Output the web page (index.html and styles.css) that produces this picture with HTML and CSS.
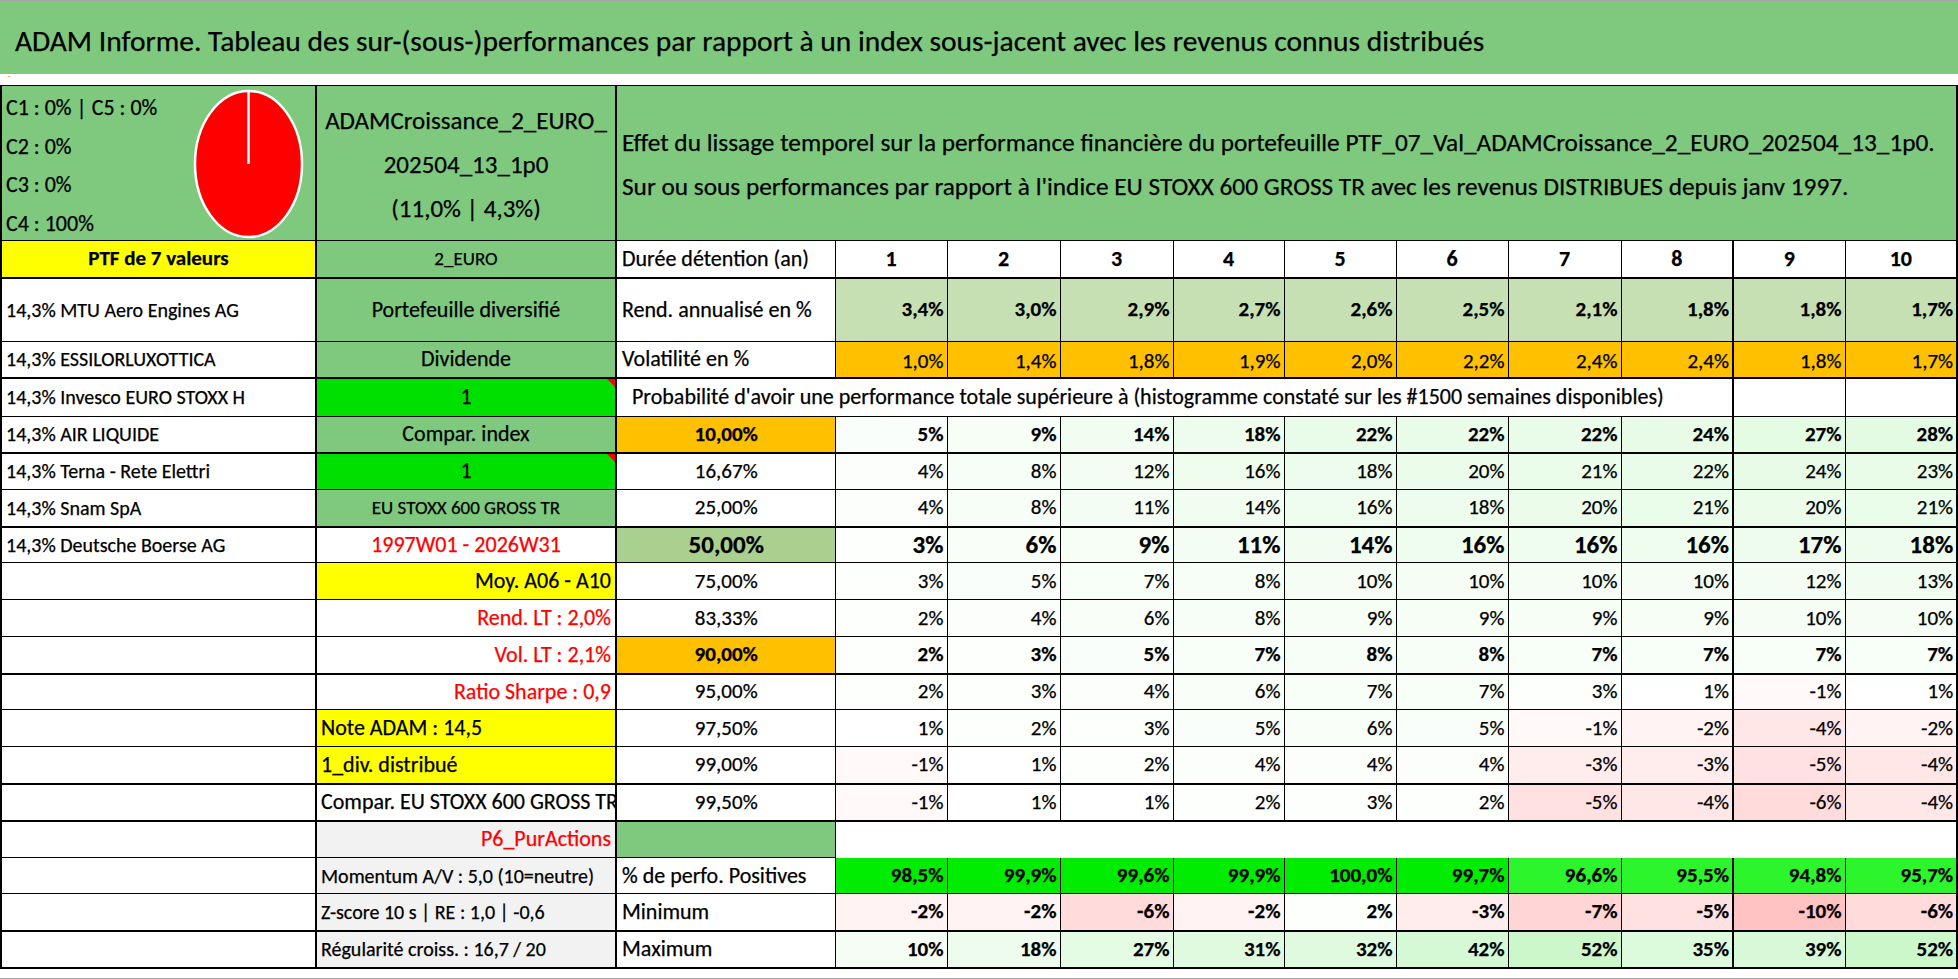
FILE: index.html
```html
<!DOCTYPE html>
<html lang="fr">
<head>
<meta charset="utf-8">
<title>ADAM Informe</title>
<link rel="stylesheet" href="styles.css">
</head>
<body>
<div class="sheet">
  <div class="title">ADAM Informe. Tableau des sur-(sous-)performances par rapport à un index sous-jacent avec les revenus connus distribués</div>
  <div class="gap"><span class="mark">˝</span></div>
  <table class="grid">
    <colgroup>
      <col class="wa"><col class="wb"><col class="wc">
      <col class="w112"><col class="w113"><col class="w113"><col class="w111"><col class="w112">
      <col class="w112"><col class="w113"><col class="w112"><col class="w112"><col class="w112">
    </colgroup>
    <tr class="h155">
      <td class="ca pie green">
        <div class="pie-box">
          <div class="clines">C1 : 0% | C5 : 0%<br>C2 : 0%<br>C3 : 0%<br>C4 : 100%</div>
          <svg class="pie-svg" width="112" height="155" viewBox="0 0 112 155">
            <ellipse cx="56.5" cy="78" rx="53.5" ry="73" fill="#ff0000" stroke="#ffffff" stroke-width="2.5"/>
            <line x1="56.5" y1="5" x2="56.5" y2="78" stroke="#ffffff" stroke-width="2.5"/>
          </svg>
        </div>
      </td>
      <td class="cb green hname">ADAMCroissance_2_EURO_<br>202504_13_1p0<br>(11,0% | 4,3%)</td>
      <td class="desc green edge" colspan="11">Effet du lissage temporel sur la performance financière du portefeuille PTF_07_Val_ADAMCroissance_2_EURO_202504_13_1p0.<br>Sur ou sous performances par rapport à l'indice EU STOXX 600 GROSS TR avec les revenus DISTRIBUES depuis janv 1997.</td>
    </tr>
    <tr class="h37 tb">
      <td class="ca yellow c b ptf">PTF de 7 valeurs</td>
      <td class="cb green small">2_EURO</td>
      <td class="cc">Durée détention (an)</td>
      <td class="hd">1</td><td class="hd">2</td><td class="hd">3</td><td class="hd">4</td><td class="hd">5</td>
      <td class="hd">6</td><td class="hd">7</td><td class="hd">8</td><td class="hd d9">9</td><td class="hd edge">10</td>
    </tr>
    <tr class="h64">
      <td class="ca">14,3% MTU Aero Engines AG</td>
      <td class="cb green">Portefeuille diversifié</td>
      <td class="cc">Rend. annualisé en %</td>
      <td class="d b rend">3,4%</td><td class="d b rend">3,0%</td><td class="d b rend">2,9%</td><td class="d b rend">2,7%</td><td class="d b rend">2,6%</td>
      <td class="d b rend">2,5%</td><td class="d b rend">2,1%</td><td class="d b rend">1,8%</td><td class="d b rend d9">1,8%</td><td class="d b rend edge">1,7%</td>
    </tr>
    <tr class="h36 tb">
      <td class="ca">14,3% ESSILORLUXOTTICA</td>
      <td class="cb green">Dividende</td>
      <td class="cc">Volatilité en %</td>
      <td class="d orange low">1,0%</td><td class="d orange low">1,4%</td><td class="d orange low">1,8%</td><td class="d orange low">1,9%</td><td class="d orange low">2,0%</td>
      <td class="d orange low">2,2%</td><td class="d orange low">2,4%</td><td class="d orange low">2,4%</td><td class="d orange low d9">1,8%</td><td class="d orange low edge">1,7%</td>
    </tr>
    <tr class="h39">
      <td class="ca">14,3% Invesco EURO STOXX H</td>
      <td class="cb lime flag">1</td>
      <td class="cc proba" colspan="9">Probabilité d'avoir une performance totale supérieure à (histogramme constaté sur les #1500 semaines disponibles)</td>
      <td class="d d9"></td><td class="d edge"></td>
    </tr>
    <tr class="h36 tb">
      <td class="ca">14,3% AIR LIQUIDE</td>
      <td class="cb green">Compar. index</td>
      <td class="cc c b orange pct">10,00%</td>
      <td class="d b g5">5%</td><td class="d b g9">9%</td><td class="d b g14">14%</td><td class="d b g18">18%</td><td class="d b g22">22%</td>
      <td class="d b g22">22%</td><td class="d b g22">22%</td><td class="d b g24">24%</td><td class="d b g27 d9">27%</td><td class="d b g28 edge">28%</td>
    </tr>
    <tr class="h37">
      <td class="ca">14,3% Terna - Rete Elettri</td>
      <td class="cb lime flag">1</td>
      <td class="cc c pct">16,67%</td>
      <td class="d g4">4%</td><td class="d g8">8%</td><td class="d g12">12%</td><td class="d g16">16%</td><td class="d g18">18%</td>
      <td class="d g20">20%</td><td class="d g21">21%</td><td class="d g22">22%</td><td class="d g24 d9">24%</td><td class="d g23 edge">23%</td>
    </tr>
    <tr class="h37 tb">
      <td class="ca">14,3% Snam SpA</td>
      <td class="cb green small">EU STOXX 600 GROSS TR</td>
      <td class="cc c pct">25,00%</td>
      <td class="d g4">4%</td><td class="d g8">8%</td><td class="d g11">11%</td><td class="d g14">14%</td><td class="d g16">16%</td>
      <td class="d g18">18%</td><td class="d g20">20%</td><td class="d g21">21%</td><td class="d g20 d9">20%</td><td class="d g21 edge">21%</td>
    </tr>
    <tr class="h36">
      <td class="ca">14,3% Deutsche Boerse AG</td>
      <td class="cb red">1997W01 - 2026W31</td>
      <td class="cc c b mid big">50,00%</td>
      <td class="d b big g3">3%</td><td class="d b big g6">6%</td><td class="d b big g9">9%</td><td class="d b big g11">11%</td><td class="d b big g14">14%</td>
      <td class="d b big g16">16%</td><td class="d b big g16">16%</td><td class="d b big g16">16%</td><td class="d b big g17 d9">17%</td><td class="d b big g18 edge">18%</td>
    </tr>
    <tr class="h37">
      <td class="ca"></td>
      <td class="cb yellow r">Moy. A06 - A10</td>
      <td class="cc c pct">75,00%</td>
      <td class="d g3">3%</td><td class="d g5">5%</td><td class="d g7">7%</td><td class="d g8">8%</td><td class="d g10">10%</td>
      <td class="d g10">10%</td><td class="d g10">10%</td><td class="d g10">10%</td><td class="d g12 d9">12%</td><td class="d g13 edge">13%</td>
    </tr>
    <tr class="h37">
      <td class="ca"></td>
      <td class="cb red r">Rend. LT : 2,0%</td>
      <td class="cc c pct">83,33%</td>
      <td class="d g2">2%</td><td class="d g4">4%</td><td class="d g6">6%</td><td class="d g8">8%</td><td class="d g9">9%</td>
      <td class="d g9">9%</td><td class="d g9">9%</td><td class="d g9">9%</td><td class="d g10 d9">10%</td><td class="d g10 edge">10%</td>
    </tr>
    <tr class="h37 tb">
      <td class="ca"></td>
      <td class="cb red r">Vol. LT : 2,1%</td>
      <td class="cc c b orange pct">90,00%</td>
      <td class="d b g2">2%</td><td class="d b g3">3%</td><td class="d b g5">5%</td><td class="d b g7">7%</td><td class="d b g8">8%</td>
      <td class="d b g8">8%</td><td class="d b g7">7%</td><td class="d b g7">7%</td><td class="d b g7 d9">7%</td><td class="d b g7 edge">7%</td>
    </tr>
    <tr class="h36">
      <td class="ca"></td>
      <td class="cb red r">Ratio Sharpe : 0,9</td>
      <td class="cc c pct">95,00%</td>
      <td class="d g2">2%</td><td class="d g3">3%</td><td class="d g4">4%</td><td class="d g6">6%</td><td class="d g7">7%</td>
      <td class="d g7">7%</td><td class="d g3">3%</td><td class="d g1">1%</td><td class="d n1 d9">-1%</td><td class="d g1 edge">1%</td>
    </tr>
    <tr class="h37">
      <td class="ca"></td>
      <td class="cb yellow l">Note ADAM : 14,5</td>
      <td class="cc c pct">97,50%</td>
      <td class="d g1">1%</td><td class="d g2">2%</td><td class="d g3">3%</td><td class="d g5">5%</td><td class="d g6">6%</td>
      <td class="d g5">5%</td><td class="d n1">-1%</td><td class="d n2">-2%</td><td class="d n4 d9">-4%</td><td class="d n2 edge">-2%</td>
    </tr>
    <tr class="h37 tb">
      <td class="ca"></td>
      <td class="cb yellow l">1_div. distribué</td>
      <td class="cc c pct">99,00%</td>
      <td class="d n1">-1%</td><td class="d g1">1%</td><td class="d g2">2%</td><td class="d g4">4%</td><td class="d g4">4%</td>
      <td class="d g4">4%</td><td class="d n3">-3%</td><td class="d n3">-3%</td><td class="d n5 d9">-5%</td><td class="d n4 edge">-4%</td>
    </tr>
    <tr class="h37 tb">
      <td class="ca"></td>
      <td class="cb l">Compar. EU STOXX 600 GROSS TR</td>
      <td class="cc c pct">99,50%</td>
      <td class="d n1">-1%</td><td class="d g1">1%</td><td class="d g1">1%</td><td class="d g2">2%</td><td class="d g3">3%</td>
      <td class="d g2">2%</td><td class="d n5">-5%</td><td class="d n4">-4%</td><td class="d n6 d9">-6%</td><td class="d n4 edge">-4%</td>
    </tr>
    <tr class="h37">
      <td class="ca"></td>
      <td class="cb grey red r">P6_PurActions</td>
      <td class="cc green"></td>
      <td class="blank edge" colspan="10"></td>
    </tr>
    <tr class="h36 topless">
      <td class="ca"></td>
      <td class="cb grey l note">Momentum A/V : 5,0 (10=neutre)</td>
      <td class="cc">% de perfo. Positives</td>
      <td class="d b pos">98,5%</td><td class="d b pos">99,9%</td><td class="d b pos">99,6%</td><td class="d b pos">99,9%</td><td class="d b pos">100,0%</td>
      <td class="d b pos">99,7%</td><td class="d b pos2">96,6%</td><td class="d b pos2">95,5%</td><td class="d b pos2 d9">94,8%</td><td class="d b pos2 edge">95,7%</td>
    </tr>
    <tr class="h37 tb">
      <td class="ca"></td>
      <td class="cb grey l note">Z-score 10 s | RE : 1,0 | -0,6</td>
      <td class="cc">Minimum</td>
      <td class="d b n2">-2%</td><td class="d b n2">-2%</td><td class="d b n6">-6%</td><td class="d b n2">-2%</td><td class="d b g2">2%</td>
      <td class="d b n3">-3%</td><td class="d b n7">-7%</td><td class="d b n5">-5%</td><td class="d b n10 d9">-10%</td><td class="d b n6 edge">-6%</td>
    </tr>
    <tr class="h37 tb">
      <td class="ca"></td>
      <td class="cb grey l note">Régularité croiss. : 16,7 / 20</td>
      <td class="cc">Maximum</td>
      <td class="d b g10">10%</td><td class="d b g18">18%</td><td class="d b g27">27%</td><td class="d b g31">31%</td><td class="d b g32">32%</td>
      <td class="d b g42">42%</td><td class="d b g52">52%</td><td class="d b g35">35%</td><td class="d b g39 d9">39%</td><td class="d b g52 edge">52%</td>
    </tr>
  </table>
</div>
</body>
</html>
```
FILE: styles.css
```css
* { box-sizing: border-box; }
html, body { margin: 0; padding: 0; background: #ffffff; }
body {
  font-family: Carlito, "Liberation Sans Narrow", "DejaVu Sans Condensed", "Liberation Sans", sans-serif;
  color: #000000;
  -webkit-text-stroke: 0.25px currentColor;
}
.sheet {
  width: 1958px;
  height: 979px;
  border-top: 1px solid #a6a6a6;
  border-bottom: 1px solid #a6a6a6;
  overflow: hidden;
}
.title {
  height: 73px;
  background: #7fc97f;
  font-size: 29.5px;
  padding: 6px 0 0 15px;
  display: flex;
  align-items: center;
  white-space: nowrap;
}
.gap {
  height: 11px;
  padding-left: 6px;
  font-size: 11px;
  line-height: 11px;
  color: #e0a030;
  -webkit-text-stroke: 0;
}
.mark { display: inline-block; }

table.grid {
  border-collapse: collapse;
  table-layout: fixed;
  width: 1956px;
}
.wa { width: 315px; }
.wb { width: 300px; }
.wc { width: 219px; }
.w111 { width: 111px; }
.w112 { width: 112px; }
.w113 { width: 113px; }

.h155 { height: 155px; }
.h64 { height: 64px; }
.h39 { height: 39px; }
.h37 { height: 37px; }
.h36 { height: 36px; }

.grid td {
  border: 1px solid #000000;
  padding: 0 4px;
  white-space: nowrap;
  overflow: hidden;
  font-size: 22px;
  line-height: 1;
  vertical-align: middle;
  background: #ffffff;
}
.grid tr.tb > td { border-bottom-width: 2px; }
.grid td.ca { font-size: 20px; text-align: left; border-left-width: 2px; }
.grid td.cb { text-align: center; border-left-width: 2px; border-right-width: 2px; }
.grid td.cc { text-align: left; padding-left: 5px; }
.grid td.d { text-align: right; padding: 0 3px 0 0; font-size: 21px; }
.grid td.low { vertical-align: bottom; padding-bottom: 5px; }
.grid td.hd { text-align: center; font-weight: bold; font-size: 22px; }
.grid td.d9 { border-left-width: 2px; }
.grid td.edge { border-right-width: 2px; }

.grid td.pie { vertical-align: top; padding: 0 0 0 4px; }
.pie-box { display: flex; height: 154px; }
.clines { width: 186px; font-size: 22px; line-height: 38.5px; padding-top: 3px; }
.pie-svg { display: block; flex: none; }

.grid td.hname { font-size: 25px; line-height: 44px; padding-top: 3px; }
.grid td.desc { font-size: 25.3px; line-height: 44px; padding-left: 5px; padding-top: 4px; text-align: left; }
.grid td.ptf { font-size: 21px; }
.grid td.small { font-size: 19px; }
.grid td.note { font-size: 20px; }
.grid td.proba { padding-left: 15px; }
.grid td.pct { font-size: 21px; }
.grid td.big { font-size: 25px; }

.grid td.l { text-align: left; }
.grid td.r { text-align: right; }
.grid td.c { text-align: center; }
.grid td.b { font-weight: bold; }
.grid td.red { color: #ff0000; }

.grid td.green { background: #7fc97f; }
.grid td.lime { background: #00e000; }
.grid td.yellow { background: #ffff00; }
.grid td.orange { background: #ffc000; }
.grid td.rend { background: #c6e0b4; }
.grid td.mid { background: #a9d08e; }
.grid td.grey { background: #f2f2f2; }
.grid td.pos { background: #00ec00; }
.grid td.pos2 { background: #2cf52c; }

.grid td.flag { position: relative; }
.grid td.flag::after {
  content: "";
  position: absolute;
  top: 0;
  right: 0;
  border-top: 8px solid #ff0000;
  border-left: 8px solid transparent;
}

.grid td.blank { border-left: none; border-bottom: none; }
.grid tr.topless > td.d { border-top: none; }

/* colour scale: positive (green) */
.grid td.g1 { background: #fefffe; }
.grid td.g2 { background: #fdfffd; }
.grid td.g3 { background: #fcfffc; }
.grid td.g4 { background: #fbfefb; }
.grid td.g5 { background: #fafefa; }
.grid td.g6 { background: #f9fef9; }
.grid td.g7 { background: #f8fef8; }
.grid td.g8 { background: #f7fef7; }
.grid td.g9 { background: #f6fef6; }
.grid td.g10 { background: #f5fdf5; }
.grid td.g11 { background: #f4fdf4; }
.grid td.g12 { background: #f3fdf3; }
.grid td.g13 { background: #f2fdf2; }
.grid td.g14 { background: #f1fdf1; }
.grid td.g16 { background: #effdef; }
.grid td.g17 { background: #eefcee; }
.grid td.g18 { background: #edfced; }
.grid td.g20 { background: #ebfceb; }
.grid td.g21 { background: #eafcea; }
.grid td.g22 { background: #e9fce9; }
.grid td.g23 { background: #e8fce8; }
.grid td.g24 { background: #e7fbe7; }
.grid td.g27 { background: #e4fbe4; }
.grid td.g28 { background: #e3fbe3; }
.grid td.g31 { background: #e0fae0; }
.grid td.g32 { background: #dffadf; }
.grid td.g35 { background: #dcfadc; }
.grid td.g39 { background: #d8f9d8; }
.grid td.g42 { background: #d5f9d5; }
.grid td.g52 { background: #cbf7cb; }

/* colour scale: negative (red) */
.grid td.n1 { background: #fff9f9; }
.grid td.n2 { background: #fff3f3; }
.grid td.n3 { background: #ffeded; }
.grid td.n4 { background: #ffe7e7; }
.grid td.n5 { background: #ffe1e1; }
.grid td.n6 { background: #ffdbdb; }
.grid td.n7 { background: #ffd5d5; }
.grid td.n10 { background: #ffc3c3; }
```
